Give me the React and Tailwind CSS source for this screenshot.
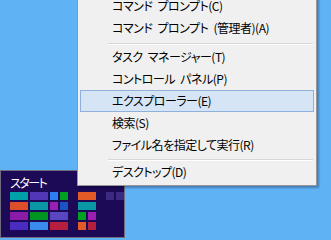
const menu = [
  { label: 'コマンド プロンプト(C)' },
  { label: 'コマンド プロンプト (管理者)(A)' },
  { sep: 'h-[7px] pt-[4px]' },
  { label: 'タスク マネージャー(T)' },
  { label: 'コントロール パネル(P)' },
  { label: 'エクスプローラー(E)', active: true },
  { label: '検索(S)' },
  { label: 'ファイル名を指定して実行(R)' },
  { sep: 'h-[5px] pt-[3px]' },
  { label: 'デスクトップ(D)' },
];

const Tile = ({ c, wide }) => (
  <div className={`h-[8px] ${wide ? 'col-span-2' : ''}`} style={{ background: c }} />
);

export default function App() {
  return (
    <div
      className="relative w-[331px] h-[240px] overflow-hidden bg-[#5fb3f5]"
      style={{ fontFamily: '"Noto Sans CJK JP", "Noto Sans", sans-serif' }}
    >
      {/* start tile */}
      <div className="absolute left-0 top-[170px] w-[125px] h-[68px] bg-[#1c0a56] border border-[#6e6e80] pl-[9px] pt-[5px]">
        <div className="text-white text-[12px] leading-[14px] tracking-[-1.5px] [font-feature-settings:'palt']">スタート</div>
        <div className="flex gap-[10px] mt-[2px]">
          <div className="grid grid-cols-[18px_18px_8px_8px] gap-[2px]">
            <Tile c="#00a0a8" />
            <Tile c="#5238b8" />
            <Tile c="#2d7ff0" />
            <Tile c="#00a021" />
            <Tile c="#dc4f2a" />
            <Tile c="#0a98a6" />
            <Tile c="#9c1fb2" />
            <Tile c="#1e50c6" />
            <Tile c="#8a1ca8" />
            <Tile c="#009522" />
            <Tile c="#5a46c0" wide />
            <Tile c="#4a2dc0" />
            <Tile c="#3a8af0" />
            <Tile c="#b61e3e" wide />
          </div>
          <div className="grid grid-cols-[8px_8px] gap-[2px] w-[18px]">
            <Tile c="#e25a25" wide />
            <Tile c="#0a98a6" wide />
            <Tile c="#00a021" />
            <Tile c="#9c1fb2" />
            <Tile c="#e25a25" />
            <Tile c="#b61e3e" />
          </div>
          <div className="flex gap-[2px] self-start">
            <div className="w-[8px] h-[8px] bg-[#3c2a82]" />
            <div className="w-[8px] h-[8px] bg-[#3c2a82]" />
          </div>
        </div>
      </div>

      {/* context menu */}
      <div className="absolute z-10 left-[77px] top-[-9px] w-[240px] bg-[#f0f0f0] border border-[#979797] pt-[3px] pb-[2px] shadow-[2px_2px_2px_rgba(0,0,40,0.3)] [font-feature-settings:'palt'] text-[12px] tracking-[-0.5px] [word-spacing:3px] text-black">
        {menu.map((m, i) =>
          m.sep ? (
            <div key={i} className={`${m.sep} ml-[30px] mr-[3px]`}>
              <div className="h-px bg-[#d7d7d7]" />
              <div className="h-px bg-white" />
            </div>
          ) : (
            <div
              key={i}
              className={`h-[22px] flex items-center mx-[2px] border ${
                m.active ? 'bg-[#d5e5f6] border-[#8fb0dc]' : 'border-transparent'
              }`}
            >
              <span className="pl-[31px] leading-none">{m.label}</span>
            </div>
          )
        )}
      </div>
    </div>
  );
}
